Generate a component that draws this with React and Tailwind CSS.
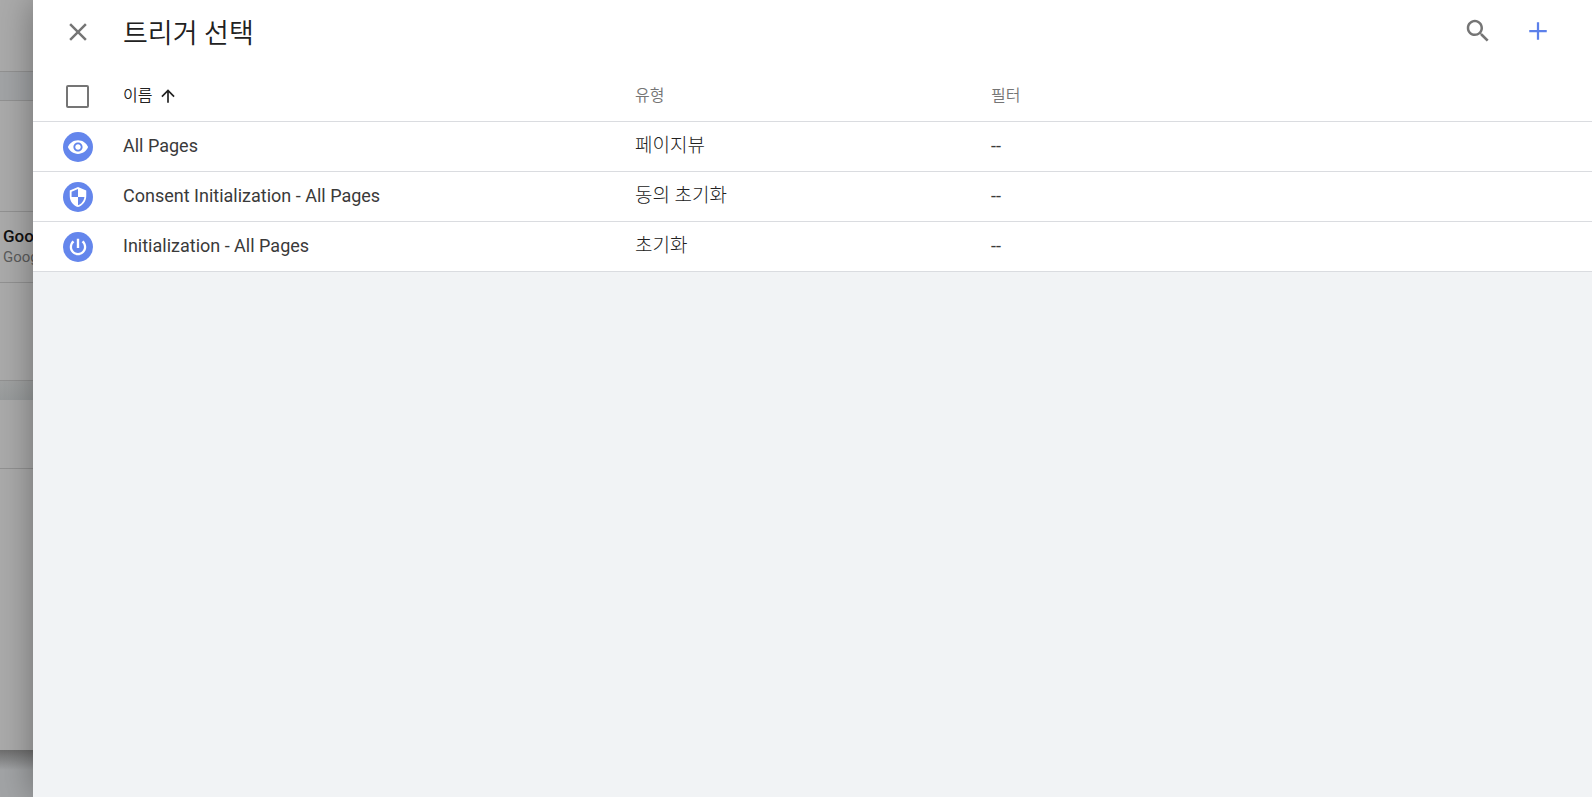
const ICONS = {
  close: 'M19 6.4 17.6 5 12 10.6 6.4 5 5 6.4 10.6 12 5 17.6 6.4 19 12 13.4 17.6 19 19 17.6 13.4 12z',
  search:
    'M15.5 14h-.79l-.28-.27C15.41 12.59 16 11.11 16 9.5 16 5.91 13.09 3 9.5 3S3 5.91 3 9.5 5.91 16 9.5 16c1.61 0 3.09-.59 4.23-1.57l.27.28v.79l5 4.99L20.49 19l-4.99-5zm-6 0C7.01 14 5 11.99 5 9.5S7.01 5 9.5 5 14 7.01 14 9.5 11.99 14 9.5 14z',
  add: 'M19 12.9h-6.1V19h-1.8v-6.1H5v-1.8h6.1V5h1.8v6.1H19z',
  up: 'M4 12l1.41 1.41L11 7.83V20h2V7.83l5.58 5.59L20 12l-8-8-8 8z',
  eye: 'M12 4.5C7 4.5 2.73 7.61 1 12c1.73 4.39 6 7.5 11 7.5s9.27-3.11 11-7.5c-1.73-4.39-6-7.5-11-7.5zM12 17c-2.76 0-5-2.24-5-5s2.24-5 5-5 5 2.24 5 5-2.24 5-5 5zm0-8c-1.66 0-3 1.34-3 3s1.34 3 3 3 3-1.34 3-3-1.34-3-3-3z',
  shield:
    'M12 1L3 5v6c0 5.55 3.84 10.74 9 12 5.16-1.26 9-6.45 9-12V5l-9-4zm0 10.99h7c-.53 4.12-3.28 7.79-7 8.94V12H5V6.3l7-3.11v8.8z',
  power:
    'M13.3 3h-2.6v10h2.6V3zm4.53 1.9l-1.8 1.8C17.6 7.9 18.5 9.81 18.5 12c0 3.6-2.9 6.5-6.5 6.5S5.5 15.6 5.5 12c0-2.19.9-4.1 2.47-5.3L6.17 4.9C4.23 6.6 3 9.26 3 12c0 4.97 4.03 9 9 9s9-4.03 9-9c0-2.74-1.23-5.4-3.17-7.1z',
}

const TRIGGERS = [
  { name: 'All Pages', type: '페이지뷰', filter: '--', icon: 'eye' },
  { name: 'Consent Initialization - All Pages', type: '동의 초기화', filter: '--', icon: 'shield' },
  { name: 'Initialization - All Pages', type: '초기화', filter: '--', icon: 'power' },
]

function Icon({ name, className }) {
  return (
    <svg viewBox="0 0 24 24" fill="currentColor" className={className} aria-hidden="true">
      <path d={ICONS[name]} />
    </svg>
  )
}

// The dimmed page that stays visible left of the sheet
function PageBehind() {
  return (
    <div className="w-[33px] shrink-0 overflow-hidden whitespace-nowrap bg-[#a2a4a6]" aria-hidden="true">
      <div className="h-[72px] border-b border-[#929292] bg-[#ababab]" />
      <div className="h-[28px]" />
      <div className="bg-[#ababab]">
        <div className="h-[112px] border-y border-[#929292]" />
        <div className="h-[71px] border-b border-[#929292] pt-3 pl-[3px]">
          <div className="text-[17px] leading-6 font-medium text-[#111]">Goo</div>
          <div className="text-[15px] leading-[18px] text-[#5c5c5c]">Goog</div>
        </div>
        <div className="h-[98px] border-b border-[#929292]" />
        <div className="h-[19px] bg-linear-to-b from-[#a0a2a2] to-[#989b9c]" />
        <div className="h-[69px] border-b border-[#929292]" />
        <div className="h-[281px]" />
      </div>
      <div className="h-5 bg-linear-to-b from-[#6e6e6e] to-[#a2a4a6]" />
    </div>
  )
}

export default function App() {
  return (
    <div className="flex min-h-screen bg-[#a2a4a6] font-[Roboto,'Noto_Sans_CJK_KR',sans-serif]">
      <PageBehind />
      <main className="relative min-w-0 flex-1 bg-[#f1f3f5] shadow-[0_0_34px_rgba(0,0,0,0.36)]">
        <header className="flex h-16 items-center bg-white pr-[39px] pl-[30px]">
          <button type="button" aria-label="닫기" className="text-[#757575]">
            <Icon name="close" className="size-[30px]" />
          </button>
          <h1 className="ml-[30px] flex-1 pt-1 text-[27px] leading-8 font-[350] text-[#212121]">트리거 선택</h1>
          <div className="flex gap-[30px] pb-0.5">
            <button type="button" aria-label="검색" className="text-[#757575]">
              <Icon name="search" className="size-[30px]" />
            </button>
            <button type="button" aria-label="새 트리거" className="text-[#5c80ea]">
              <Icon name="add" className="size-[30px]" />
            </button>
          </div>
        </header>

        <table className="w-full table-fixed border-collapse bg-white text-left">
          <colgroup>
            <col className="w-[90px]" />
            <col className="w-[512px]" />
            <col className="w-[356px]" />
            <col />
          </colgroup>
          <thead>
            <tr className="h-[57px] border-b border-[#dadce0] text-[16px] leading-6 text-[#757575]">
              <th className="pt-2 pl-[33px]">
                <input
                  type="checkbox"
                  aria-label="모두 선택"
                  className="block size-[23px] appearance-none rounded-xs border-2 border-[#757575]"
                />
              </th>
              <th className="pt-2 font-[350] text-[#212121]" aria-sort="ascending">
                <button type="button" className="flex items-center gap-1.5">
                  이름
                  <Icon name="up" className="size-5" />
                </button>
              </th>
              <th className="pt-2 font-[350]">유형</th>
              <th className="pt-2 font-[350]">필터</th>
            </tr>
          </thead>
          <tbody>
            {TRIGGERS.map(t => (
              <tr key={t.name} className="h-[50px] border-b border-[#dadce0] text-[18px] leading-6 text-[#3a3a3a]">
                <td className="pt-0.5 pl-[30px]">
                  <span className="flex size-[30px] items-center justify-center rounded-full bg-[#6486ec] text-white">
                    <Icon name={t.icon} className="size-[22px]" />
                  </span>
                </td>
                <td>{t.name}</td>
                <td className="text-[19px] font-light text-[#212121]">{t.type}</td>
                <td>{t.filter}</td>
              </tr>
            ))}
          </tbody>
        </table>
      </main>
    </div>
  )
}
